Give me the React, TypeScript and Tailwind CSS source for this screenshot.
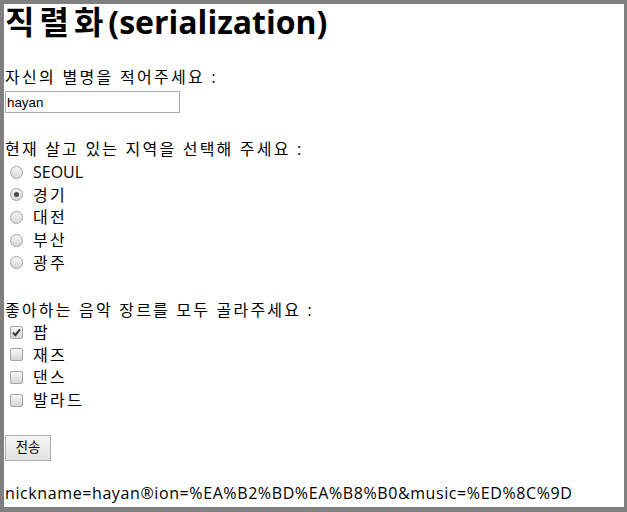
import React from 'react';

const regions = ['SEOUL', '경기', '대전', '부산', '광주'];
const genres = ['팝', '재즈', '댄스', '발라드'];

function Radio({ checked }: { checked: boolean }) {
  return (
    <span className="ml-[5px] w-[13px] h-[13px] shrink-0 rounded-full border border-[#a3a3a3] bg-linear-to-b from-[#f7f7f7] to-[#d6d6d6] flex items-center justify-center">
      {checked && <span className="w-[5px] h-[5px] rounded-full bg-[#4a4a4a]" />}
    </span>
  );
}

function Check({ checked }: { checked: boolean }) {
  return (
    <span className="ml-[5px] w-[13px] h-[13px] shrink-0 rounded-[2px] border border-[#a3a3a3] bg-linear-to-b from-[#f7f7f7] to-[#d6d6d6] flex items-center justify-center">
      {checked && (
        <svg width="9" height="9" viewBox="0 0 9 9">
          <path d="M1 4.6 L3.4 7.2 L8 1.4" fill="none" stroke="#333" strokeWidth="1.9" />
        </svg>
      )}
    </span>
  );
}

export default function App() {
  return (
    <div className="w-[627px] h-[512px] box-border border-l-4 border-t-4 border-r-[3px] border-b-[5px] border-[#808080] bg-white text-black font-['Open_Sans','Noto_Sans_CJK_KR',sans-serif] overflow-hidden">
      <div className="pl-px flex flex-col">
        <h1 className="h-[36px] leading-[36px] text-[32px] font-bold whitespace-nowrap">
          <span className="tracking-[5px]">직렬화</span>(serialization)
        </h1>

        <div className="mt-[26px] h-[22px] leading-[22px] text-[16px] tracking-[2.3px] whitespace-nowrap">자신의 별명을 적어주세요 :</div>
        <input
          type="text"
          defaultValue="hayan"
          className="mt-[3px] w-[175px] h-[22px] border border-[#a9a9a9] px-[1px] text-[13.33px] font-['Liberation_Sans',sans-serif] outline-none"
        />

        <div className="mt-[25px] h-[23px] leading-[23px] text-[16px] tracking-[2.2px] whitespace-nowrap">현재 살고 있는 지역을 선택해 주세요 :</div>
        {regions.map((r, i) => (
          <div key={r} className="h-[22.6px] flex items-center text-[16px]">
            <Radio checked={i === 1} />
            <span className={i === 0 ? 'ml-[10px] leading-[22px]' : 'ml-[10px] leading-[22px] tracking-[2.3px]'}>{r}</span>
          </div>
        ))}

        <div className="mt-[25px] h-[22px] leading-[22px] text-[16px] tracking-[2.2px] whitespace-nowrap">좋아하는 음악 장르를 모두 골라주세요 :</div>
        {genres.map((g, i) => (
          <div key={g} className="h-[22.6px] flex items-center text-[16px]">
            <Check checked={i === 0} />
            <span className="ml-[10px] leading-[22px] tracking-[2.3px]">{g}</span>
          </div>
        ))}

        <div className="mt-[23px]">
          <button
            type="button"
            className="w-[46px] h-[26px] border border-[#adadad] bg-linear-to-b from-[#f6f6f6] to-[#e3e3e3] text-[13.33px] leading-none"
          >
            전송
          </button>
        </div>

        <div className="mt-[21px] h-[22px] leading-[22px] text-[16px] tracking-[0.6px] whitespace-nowrap">
          nickname=hayan®ion=%EA%B2%BD%EA%B8%B0&amp;music=%ED%8C%9D
        </div>
      </div>
    </div>
  );
}
